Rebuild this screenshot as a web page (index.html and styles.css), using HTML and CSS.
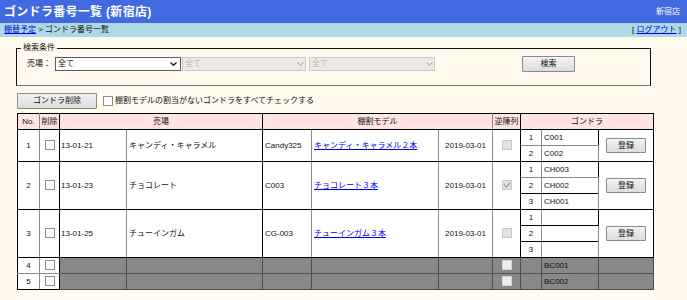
FILE: index.html
```html
<!DOCTYPE html>
<html lang="ja">
<head>
<meta charset="utf-8">
<title>ゴンドラ番号一覧</title>
<link rel="stylesheet" href="styles.css">
</head>
<body>
<header class="topbar">
  <h1 class="title">ゴンドラ番号一覧 (新宿店)</h1>
  <span class="store">新宿店</span>
</header>
<nav class="crumbs">
  <div class="crumb-path"><a href="#">棚替予定</a> &gt; ゴンドラ番号一覧</div>
  <div class="logout">[ <a href="#">ログアウト</a> ]</div>
</nav>
<main class="content">
  <fieldset class="search">
    <legend class="search-legend">検索条件</legend>
    <div class="search-row">
      <label class="field-label">売場：</label>
      <span class="sel sel-a"><select class="sel-box"><option>全て</option></select><svg class="chev" width="7" height="4" viewBox="0 0 7 4"><path d="M0.5 0.5 L3.5 3.3 L6.5 0.5" fill="none" stroke="#111" stroke-width="1.2"/></svg></span>
      <span class="sel sel-b"><select class="sel-box" disabled><option>全て</option></select><svg class="chev chev-off" width="7" height="4" viewBox="0 0 7 4"><path d="M0.5 0.5 L3.5 3.3 L6.5 0.5" fill="none" stroke="#9a9a9a" stroke-width="1"/></svg></span>
      <span class="sel sel-c"><select class="sel-box" disabled><option>全て</option></select><svg class="chev chev-off" width="7" height="4" viewBox="0 0 7 4"><path d="M0.5 0.5 L3.5 3.3 L6.5 0.5" fill="none" stroke="#9a9a9a" stroke-width="1"/></svg></span>
      <button class="btn btn-search" type="button">検索</button>
    </div>
  </fieldset>

  <div class="actions">
    <button class="btn btn-delete" type="button">ゴンドラ削除</button>
    <label class="check-all"><input type="checkbox" class="cb"><span>棚割モデルの割当がないゴンドラをすべてチェックする</span></label>
  </div>

  <table class="grid">
    <colgroup>
      <col class="w-no"><col class="w-del"><col class="w-code"><col class="w-name">
      <col class="w-mcode"><col class="w-mname"><col class="w-date"><col class="w-rev">
      <col class="w-gnum"><col class="w-gcode"><col class="w-btn">
    </colgroup>
    <thead>
      <tr>
        <th class="bl">No.</th>
        <th class="br">削除</th>
        <th class="br" colspan="2">売場</th>
        <th colspan="3">棚割モデル</th>
        <th class="br">逆陳列</th>
        <th class="br" colspan="3">ゴンドラ</th>
      </tr>
    </thead>
    <tbody>
      <tr>
        <td class="c-no bl bb" rowspan="2">1</td>
        <td class="c-del br bb" rowspan="2"><input type="checkbox" class="cb"></td>
        <td class="c-code bb" rowspan="2">13-01-21</td>
        <td class="c-name br bb" rowspan="2">キャンディ・キャラメル</td>
        <td class="c-mcode bb" rowspan="2">Candy325</td>
        <td class="c-mname bb" rowspan="2"><a href="#">キャンディ・キャラメル２本</a></td>
        <td class="c-date bb" rowspan="2">2019-03-01</td>
        <td class="c-rev br bb" rowspan="2"><input type="checkbox" class="cb" disabled></td>
        <td class="c-gnum">1</td>
        <td class="c-gcode br">C001</td>
        <td class="c-btn br bb" rowspan="2"><button class="btn btn-reg" type="button">登録</button></td>
      </tr>
      <tr>
        <td class="c-gnum bb">2</td>
        <td class="c-gcode br bb">C002</td>
      </tr>

      <tr>
        <td class="c-no bl bb" rowspan="3">2</td>
        <td class="c-del br bb" rowspan="3"><input type="checkbox" class="cb"></td>
        <td class="c-code bb" rowspan="3">13-01-23</td>
        <td class="c-name br bb" rowspan="3">チョコレート</td>
        <td class="c-mcode bb" rowspan="3">C003</td>
        <td class="c-mname bb" rowspan="3"><a href="#">チョコレート３本</a></td>
        <td class="c-date bb" rowspan="3">2019-03-01</td>
        <td class="c-rev br bb" rowspan="3"><input type="checkbox" class="cb" disabled checked></td>
        <td class="c-gnum">1</td>
        <td class="c-gcode br">CH003</td>
        <td class="c-btn br bb" rowspan="3"><button class="btn btn-reg" type="button">登録</button></td>
      </tr>
      <tr>
        <td class="c-gnum bb">2</td>
        <td class="c-gcode br bb">CH002</td>
      </tr>
      <tr>
        <td class="c-gnum bb">3</td>
        <td class="c-gcode br bb">CH001</td>
      </tr>

      <tr>
        <td class="c-no bl bb" rowspan="3">3</td>
        <td class="c-del br bb" rowspan="3"><input type="checkbox" class="cb"></td>
        <td class="c-code bb" rowspan="3">13-01-25</td>
        <td class="c-name br bb" rowspan="3">チューインガム</td>
        <td class="c-mcode bb" rowspan="3">CG-003</td>
        <td class="c-mname bb" rowspan="3"><a href="#">チューインガム３本</a></td>
        <td class="c-date bb" rowspan="3">2019-03-01</td>
        <td class="c-rev br bb" rowspan="3"><input type="checkbox" class="cb" disabled></td>
        <td class="c-gnum bb">1</td>
        <td class="c-gcode br bb"></td>
        <td class="c-btn br bb" rowspan="3"><button class="btn btn-reg" type="button">登録</button></td>
      </tr>
      <tr>
        <td class="c-gnum bb">2</td>
        <td class="c-gcode br bb"></td>
      </tr>
      <tr>
        <td class="c-gnum bb">3</td>
        <td class="c-gcode br bb"></td>
      </tr>

      <tr class="gray-row">
        <td class="c-no bl">4</td>
        <td class="c-del br"><input type="checkbox" class="cb"></td>
        <td class="g"></td>
        <td class="g br"></td>
        <td class="g"></td>
        <td class="g"></td>
        <td class="g"></td>
        <td class="g c-rev br"><input type="checkbox" class="cb" disabled></td>
        <td class="g"></td>
        <td class="g c-gcode br">BC001</td>
        <td class="g br"></td>
      </tr>
      <tr class="gray-row">
        <td class="c-no bl bb">5</td>
        <td class="c-del br bb"><input type="checkbox" class="cb"></td>
        <td class="g bb"></td>
        <td class="g br bb"></td>
        <td class="g bb"></td>
        <td class="g bb"></td>
        <td class="g bb"></td>
        <td class="g c-rev br bb"><input type="checkbox" class="cb" disabled></td>
        <td class="g bb"></td>
        <td class="g c-gcode br bb">BC002</td>
        <td class="g br bb"></td>
      </tr>
    </tbody>
  </table>
</main>
</body>
</html>
```

FILE: styles.css
```css
html, body {
  margin: 0;
  padding: 0;
}

body {
  background: #fff9ee;
  color: #111;
  font-family: "Liberation Sans", "Noto Sans CJK JP", sans-serif;
  font-size: 8px;
  width: 687px;
  height: 300px;
  overflow: hidden;
}

a {
  color: #0000ee;
  text-decoration: underline;
}

/* top bar */
.topbar {
  height: 23px;
  background: #4169e1;
  display: flex;
  align-items: center;
  justify-content: space-between;
  padding: 0 7px 0 4px;
  box-sizing: border-box;
  color: #fff;
}

.title {
  margin: 0;
  font-size: 12px;
  line-height: 14px;
  font-weight: bold;
  letter-spacing: 0.3px;
}

.store {
  font-size: 8px;
  line-height: 10px;
}

/* breadcrumbs */
.crumbs {
  height: 14px;
  background: #add8e6;
  display: flex;
  align-items: center;
  justify-content: space-between;
  padding: 0 6px 0 4px;
  box-sizing: border-box;
  line-height: 10px;
}

/* content */
.content {
  padding: 6px 0 0 16px;
}

.search {
  width: 635px;
  box-sizing: border-box;
  margin: 0;
  padding: 3px 0 13px 4px;
  border: 1px solid #111;
  border-bottom-color: #7a7a7a;
  min-inline-size: 0;
}

.search-legend {
  padding: 0 2px;
  line-height: 10px;
  font-size: 8px;
}

.search-row {
  display: flex;
  align-items: center;
  height: 16px;
}

.field-label {
  margin-left: 6px;
  width: 28px;
  line-height: 10px;
}

.sel {
  position: relative;
  display: block;
  height: 14px;
}

.sel-a { width: 126px; }
.sel-b { width: 124px; margin-left: 1px; }
.sel-c { width: 126px; margin-left: 3px; }

.sel-box {
  appearance: none;
  -webkit-appearance: none;
  display: block;
  width: 100%;
  height: 14px;
  margin: 0;
  padding: 0 0 0 2px;
  box-sizing: border-box;
  border: 1px solid #5a5a5a;
  border-radius: 0;
  background: #fff;
  color: #111;
  font-family: "Liberation Sans", "Noto Sans CJK JP", sans-serif;
  font-size: 8px;
  line-height: 12px;
}

.sel-box:disabled {
  background: #e4e4e4;
  border-color: #b5b5b5;
  color: #9a9a9a;
}

.chev {
  position: absolute;
  right: 4px;
  top: 5px;
}

.chev-off {
  right: 2px;
}

.btn {
  font-family: "Liberation Sans", "Noto Sans CJK JP", sans-serif;
  font-size: 8px;
  line-height: 10px;
  color: #111;
  background: linear-gradient(#f3f3f3, #dcdcdc);
  border: 1px solid #8a8a8a;
  border-radius: 1px;
  padding: 0;
  margin: 0;
  box-sizing: border-box;
}

.btn-search {
  width: 53px;
  height: 16px;
  margin-left: 87px;
}

.actions {
  display: flex;
  align-items: center;
  margin: 7px 0 0 1px;
  height: 16px;
}

.btn-delete {
  width: 80px;
  height: 16px;
}

.check-all {
  display: flex;
  align-items: center;
  margin-left: 6px;
  line-height: 10px;
}

.check-all span {
  margin-left: 2px;
}

/* checkbox */
.cb {
  appearance: none;
  -webkit-appearance: none;
  position: relative;
  display: inline-block;
  width: 10px;
  height: 10px;
  margin: 0;
  box-sizing: border-box;
  border: 1px solid #8c8c8c;
  background: #fff;
  vertical-align: middle;
}

.cb:disabled {
  background: #e2e2e2;
  border-color: #c9c9c9;
}

.cb:checked::after {
  content: "";
  position: absolute;
  left: 2px;
  top: 0px;
  width: 3px;
  height: 5px;
  border: solid #8a8a8a;
  border-width: 0 1px 1px 0;
  transform: rotate(40deg);
}

/* table */
.grid {
  border-collapse: collapse;
  table-layout: fixed;
  width: 637px;
  margin: 4px 0 0 1px;
  font-size: 8px;
}

.w-no { width: 22px; }
.w-del { width: 20px; }
.w-code { width: 67px; }
.w-name { width: 136px; }
.w-mcode { width: 49px; }
.w-mname { width: 127px; }
.w-date { width: 54px; }
.w-rev { width: 28px; }
.w-gnum { width: 21px; }
.w-gcode { width: 57px; }
.w-btn { width: 55px; }

.grid tr {
  height: 16px;
}

.grid th,
.grid td {
  border: 1px solid #8a8a8a;
  padding: 0;
  line-height: 10px;
  white-space: nowrap;
  overflow: hidden;
  background: #fff;
  text-align: left;
  vertical-align: middle;
}

.grid th {
  background: #ffe4e1;
  font-weight: normal;
  text-align: center;
  border-top-color: #000;
  border-bottom-color: #000;
}

.grid td.g {
  background: #888;
  border-color: #505050;
}

.grid .bl { border-left-color: #000; }
.grid .br { border-right-color: #000; }
.grid .bb { border-bottom-color: #000; }

.grid .c-no,
.grid .c-del,
.grid .c-date,
.grid .c-rev,
.grid .c-gnum,
.grid .c-btn {
  text-align: center;
}

.grid .c-code { padding-left: 1px; }
.grid .c-name,
.grid .c-mcode,
.grid .c-mname,
.grid .c-gcode { padding-left: 2px; }

.gray-row .cb:disabled {
  background: #ececec;
  border-color: #d2d2d2;
}

.btn-reg {
  width: 40px;
  height: 15px;
  vertical-align: middle;
}
```
